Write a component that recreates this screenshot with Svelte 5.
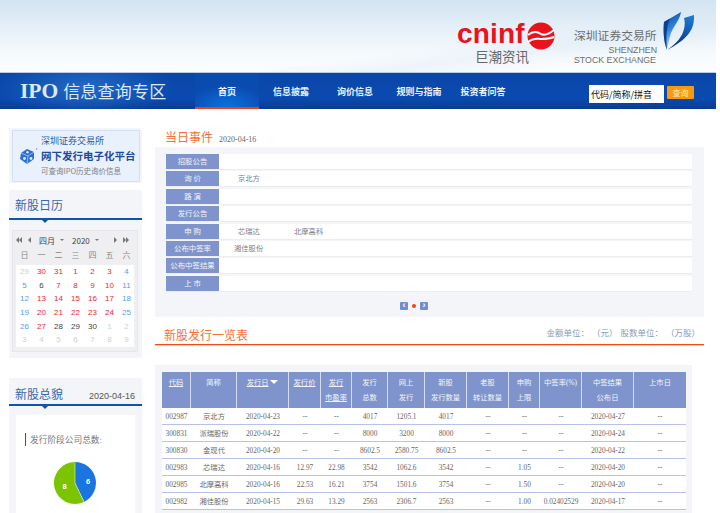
<script>
  const nav = ['首页', '信息披露', '询价信息', '规则与指南', '投资者问答'];
  const weekDays = ['日', '一', '二', '三', '四', '五', '六'];

  // m = other month, r = subscription day, w = weekend, plain = normal
  const calendar = [
    [['29', 'm'], ['30', 'r'], ['31', 'r'], ['1', 'r'], ['2', 'r'], ['3', 'r'], ['4', 'w']],
    [['5', 'w'], ['6', ''], ['7', 'r'], ['8', 'r'], ['9', 'r'], ['10', 'r'], ['11', 'w']],
    [['12', 'w'], ['13', 'r'], ['14', 'r'], ['15', 'r'], ['16', 'r'], ['17', 'r'], ['18', 'w']],
    [['19', 'w'], ['20', 'r'], ['21', 'r'], ['22', 'r'], ['23', 'r'], ['24', 'r'], ['25', 'w']],
    [['26', 'w'], ['27', 'r'], ['28', ''], ['29', ''], ['30', ''], ['1', 'm'], ['2', 'm']],
    [['3', 'm'], ['4', 'm'], ['5', 'm'], ['6', 'm'], ['7', 'm'], ['8', 'm'], ['9', 'm']]
  ];

  const events = [
    { label: '招股公告', items: [] },
    { label: '询 价', items: ['京北方'] },
    { label: '路 演', items: [] },
    { label: '发行公告', items: [] },
    { label: '申 购', items: ['芯瑞达', '北摩高科'] },
    { label: '公布中签率', items: ['湘佳股份'], near: true },
    { label: '公布中签结果', items: [] },
    { label: '上 市', items: [] }
  ];

  const columns = [29, 46, 52, 32, 31, 36, 37, 42, 42, 31, 42, 52, 52];

  const rows = [
    ['002987', '京北方', '2020-04-23', '--', '--', '4017', '1205.1', '4017', '--', '--', '--', '2020-04-27', '--'],
    ['300831', '派瑞股份', '2020-04-22', '--', '--', '8000', '3200', '8000', '--', '--', '--', '2020-04-24', '--'],
    ['300830', '金现代', '2020-04-20', '--', '--', '8602.5', '2580.75', '8602.5', '--', '--', '--', '2020-04-22', '--'],
    ['002983', '芯瑞达', '2020-04-16', '12.97', '22.98', '3542', '1062.6', '3542', '--', '1.05', '--', '2020-04-20', '--'],
    ['002985', '北摩高科', '2020-04-16', '22.53', '16.21', '3754', '1501.6', '3754', '--', '1.50', '--', '2020-04-20', '--'],
    ['002982', '湘佳股份', '2020-04-15', '29.63', '13.29', '2563', '2306.7', '2563', '--', '1.00', '0.02402529', '2020-04-17', '--']
  ];
</script>

<div class="page">
  <header class="top">
    <div class="logos">
      <div class="cninf">
        <div class="cninf__main">
          <span class="cninf__word">cninf</span>
          <svg class="cninf__mark" viewBox="0 0 28 28" width="28" height="28">
            <circle cx="14" cy="14" r="13.5" fill="#e8131c" />
            <path d="M1 13 C7 8 11 10 14 12 C18 14 22 12 27 8" fill="none" stroke="#fff" stroke-width="2" />
            <path d="M1 20 C7 15 11 17 14 17 C18 17 22 17 27 15" fill="none" stroke="#fff" stroke-width="2" />
          </svg>
        </div>
        <div class="cninf__cn">巨潮资讯</div>
      </div>
      <div class="szse">
        <div class="szse__cn">深圳证券交易所</div>
        <div class="szse__en szse__en--right">SHENZHEN</div>
        <div class="szse__en">STOCK EXCHANGE</div>
      </div>
      <svg class="shield" viewBox="0 0 31 41" width="31" height="41">
        <defs>
          <linearGradient id="shieldA" x1="0.2" y1="0" x2="0.5" y2="1">
            <stop offset="0" stop-color="#0d469e" />
            <stop offset="0.45" stop-color="#2f83dc" />
            <stop offset="1" stop-color="#c5ecfb" />
          </linearGradient>
          <linearGradient id="shieldB" x1="0.7" y1="0" x2="0.3" y2="1">
            <stop offset="0" stop-color="#1a7ad0" />
            <stop offset="1" stop-color="#06287a" />
          </linearGradient>
        </defs>
        <path d="M1 11 L18 1 C17 9 11 14 8 22 C6 28 5 34 4 39 C1 32 0 22 1 11 Z" fill="url(#shieldA)" />
        <path d="M1 11 L7 7.5 C3 16 3 28 4 39 C1 32 0 22 1 11 Z" fill="#0b3f94" />
        <path d="M21 7 L31 4 C31.5 17 27 27 4 39 C14 32 19 26 21 18 C22 14 22 10 21 7 Z" fill="url(#shieldB)" />
      </svg>
    </div>
  </header>

  <nav class="bar">
    <div class="brand"><span class="brand__ipo">IPO</span> 信息查询专区</div>
    <ul class="menu">
      {#each nav as item, i}
        <li class="menu__item" class:active={i === 0}>{item}</li>
      {/each}
    </ul>
    <div class="search">
      <input class="search__input" value="代码/简称/拼音" />
      <button class="search__btn" type="button">查询</button>
    </div>
  </nav>

  <div class="content">
    <aside class="side">
      <div class="promo">
        <div class="promo__inner">
          <svg class="promo__icon" viewBox="0 0 20 20" width="20" height="20">
            <path d="M9 3 L16 6 L16 13 L9 18 L2 13 L3 7 Z" fill="#2f6fd0" />
            <path d="M3 7 L10 10 L16 6 M10 10 L9 18" fill="none" stroke="#a9cdf6" stroke-width="0.8" />
            <circle cx="6.5" cy="12.5" r="1.4" fill="#dcebfb" />
            <circle cx="13" cy="12.5" r="1.4" fill="#dcebfb" />
            <circle cx="9.5" cy="6.3" r="1.2" fill="#dcebfb" />
            <circle cx="18.5" cy="3" r="0.8" fill="#5aa6ea" />
          </svg>
          <div>
            <div class="promo__a">深圳证券交易所</div>
            <div class="promo__b">网下发行电子化平台</div>
            <div class="promo__c">可查询IPO历史询价信息</div>
          </div>
        </div>
      </div>

      <section class="box box--calendar">
        <h2 class="box__title"><span>新股日历</span></h2>
        <div class="cal">
          <div class="cal__head">
            <span class="cal__arrows">
              <i class="tri tri--l"></i><i class="tri tri--l"></i><i class="gap"></i><i class="tri tri--l"></i>
            </span>
            <span class="cal__pick cal__pick--month">四月<i class="caret"></i></span>
            <span class="cal__pick">2020<i class="caret"></i></span>
            <span class="cal__arrows cal__arrows--right">
              <i class="tri tri--r"></i><i class="gap"></i><i class="tri tri--r"></i><i class="tri tri--r"></i>
            </span>
          </div>
          <div class="cal__week">
            {#each weekDays as d}<span>{d}</span>{/each}
          </div>
          <div class="cal__days">
            {#each calendar as week}
              {#each week as [day, kind]}
                <span class="day {kind}">{day}</span>
              {/each}
            {/each}
          </div>
        </div>
      </section>

      <section class="box box--overview">
        <h2 class="box__title"><span>新股总貌</span><em>2020-04-16</em></h2>
        <div class="overview">
          <div class="overview__label">发行阶段公司总数:</div>
          <svg class="pie" viewBox="0 0 44 44" width="44" height="44">
            <path d="M22 22 L22 1 A21 21 0 0 1 31.1 40.9 Z" fill="#1a75e0" />
            <path d="M22 22 L31.1 40.9 A21 21 0 1 1 22 1 Z" fill="#7cc400" />
            <path d="M22 1 L22 22 L31.1 40.9" fill="none" stroke="#fff" stroke-width="0.5" />
            <text x="33" y="23" class="pie__num">6</text>
            <text x="9.5" y="28" class="pie__num">8</text>
          </svg>
        </div>
      </section>
    </aside>

    <main class="main">
      <div class="heading">
        <h2>当日事件</h2>
        <span>2020-04-16</span>
      </div>

      <div class="events">
        {#each events as row}
          <div class="event">
            <div class="event__label">{row.label}</div>
            <div class="event__items" class:near={row.near}>
              {#each row.items as name}<span>{name}</span>{/each}
            </div>
          </div>
        {/each}
        <div class="pager">
          <i class="pager__btn">‹</i>
          <i class="pager__dot"></i>
          <i class="pager__btn">›</i>
        </div>
      </div>

      <div class="listhead">
        <h2>新股发行一览表</h2>
        <div class="units">
          <span>金额单位：</span><span>（元）</span><span>股数单位：</span><span>（万股）</span>
        </div>
      </div>

      <div class="tablewrap">
        <table>
          <colgroup>
            {#each columns as w}<col style="width: {w}px" />{/each}
          </colgroup>
          <thead>
            <tr>
              <th><u>代码</u></th>
              <th>简称</th>
              <th><u>发行日</u> <i class="sort"></i></th>
              <th><u>发行价</u></th>
              <th><u>发行</u><br /><u>市盈率</u></th>
              <th>发行<br />总数</th>
              <th>网上<br />发行</th>
              <th>新股<br />发行数量</th>
              <th>老股<br />转让数量</th>
              <th>申购<br />上限</th>
              <th>中签率(%)</th>
              <th>中签结果<br />公布日</th>
              <th>上市日</th>
            </tr>
          </thead>
          <tbody>
            {#each rows as row}
              <tr>
                {#each row as cell}<td>{cell}</td>{/each}
              </tr>
            {/each}
          </tbody>
        </table>
      </div>
    </main>
  </div>
</div>

<style>
  :global(body) {
    margin: 0;
    background: #fff;
    overflow: hidden;
  }

  .page {
    width: 716px;
    height: 513px;
    overflow: hidden;
    font-family: "Liberation Serif", "Noto Sans CJK SC", serif;
    font-size: 9px;
    color: #666;
  }

  .top {
    height: 73px;
    box-sizing: border-box;
    background:
      linear-gradient(172deg, transparent 62%, rgba(214, 230, 243, 0.35) 72%, transparent 84%),
      linear-gradient(180deg, #d2e3f2 0%, #e6f0f8 40%, #f8fbfd 80%, #fafcfe 100%);
    border-bottom: 1px solid #b9cde6;
  }

  .logos {
    display: flex;
    justify-content: flex-end;
    padding: 11px 22px 0 0;
  }

  .cninf {
    width: 100px;
    margin-right: 17px;
    padding-top: 9px;
    font-family: "Liberation Sans", "Noto Sans CJK SC", sans-serif;
  }

  .cninf__main {
    display: flex;
    align-items: flex-start;
    height: 30px;
  }

  .cninf__word {
    font-size: 28px;
    font-weight: 700;
    color: #e8131c;
    letter-spacing: 0.2px;
    line-height: 29px;
    margin-top: -1px;
  }

  .cninf__mark {
    margin-left: 2px;
    margin-top: 2px;
    flex: none;
  }

  .cninf__cn {
    margin-left: 18px;
    font-size: 13.5px;
    line-height: 15px;
    color: #666;
    white-space: nowrap;
  }

  .szse {
    width: 83px;
    padding-top: 18px;
    font-family: "Liberation Sans", "Noto Sans CJK SC", sans-serif;
    color: #6c6c6c;
  }

  .szse__cn {
    font-size: 11.8px;
    line-height: 14px;
    white-space: nowrap;
    margin-bottom: 2px;
  }

  .szse__en {
    font-size: 8.8px;
    line-height: 10px;
    white-space: nowrap;
  }

  .szse__en--right {
    text-align: right;
  }

  .shield {
    margin-left: 6px;
    flex: none;
  }

  .bar {
    display: flex;
    align-items: stretch;
    height: 36px;
    background: linear-gradient(180deg, #0a46a8 0%, #0a4ab0 70%, #083c92 100%);
    color: #fff;
  }

  .brand {
    width: 175px;
    padding-left: 20px;
    font-family: "Liberation Sans", "Noto Sans CJK SC", sans-serif;
    font-size: 17px;
    line-height: 36px;
    letter-spacing: 0.2px;
    color: #dce9f7;
    white-space: nowrap;
    background: radial-gradient(ellipse 90px 30px at 85px 14px, #2169c4 0%, transparent 100%);
  }

  .brand__ipo {
    font-family: "Liberation Serif", serif;
    font-size: 21.5px;
    font-weight: 700;
    letter-spacing: 0;
  }

  .menu {
    display: flex;
    margin: 0;
    padding: 0;
    list-style: none;
  }

  .menu__item {
    width: 64px;
    text-align: center;
    font-family: "Noto Sans CJK SC", sans-serif;
    font-size: 9px;
    font-weight: 700;
    line-height: 37px;
    color: #eef4fb;
    white-space: nowrap;
  }

  .menu__item.active {
    box-sizing: border-box;
    background: radial-gradient(ellipse 40px 22px at 50% 100%, #0b72e0 0%, #0a4bb0 100%);
    border-bottom: 2px solid #f0401a;
  }

  .search {
    display: flex;
    align-items: flex-start;
    gap: 3px;
    margin-left: 74px;
    padding-top: 12px;
  }

  .search__input {
    width: 75px;
    height: 18px;
    box-sizing: border-box;
    padding: 1px 2px 0;
    border: 0;
    background: #fff;
    color: #111;
    font-family: "Noto Sans CJK SC", sans-serif;
    font-size: 9px;
  }

  .search__btn {
    width: 27px;
    height: 13px;
    margin-top: 1px;
    padding: 0;
    border: 0;
    border-radius: 1px;
    background: #f99a0e;
    color: #ffe9c8;
    font-family: "Noto Sans CJK SC", sans-serif;
    font-size: 8px;
    line-height: 13px;
  }

  .content {
    display: flex;
    align-items: flex-start;
    gap: 13px;
    padding: 19px 12px 0 9px;
  }

  .side {
    width: 133px;
    flex: none;
    font-family: "Noto Sans CJK SC", sans-serif;
  }

  .promo {
    height: 55px;
    box-sizing: border-box;
    padding: 2px 2px 1px 3px;
    background: #f4f5f9;
  }

  .promo__inner {
    display: flex;
    align-items: center;
    gap: 3px;
    height: 100%;
    box-sizing: border-box;
    padding-left: 5px;
    background: #e9f1fc;
    border: 1px solid #d2e0f6;
    border-radius: 1px;
  }

  .promo__icon {
    flex: none;
    margin-top: -1px;
  }

  .promo__a {
    font-size: 9px;
    line-height: 14px;
    color: #2a5aa6;
    white-space: nowrap;
  }

  .promo__b {
    font-size: 10.5px;
    font-weight: 700;
    line-height: 15px;
    color: #1f4b9c;
    white-space: nowrap;
  }

  .promo__c {
    font-size: 7.5px;
    line-height: 15px;
    color: #7d7d85;
    white-space: nowrap;
  }

  .box {
    background: #f4f5f9;
  }

  .box--calendar {
    height: 168px;
    margin-top: 7px;
    box-sizing: border-box;
    padding-top: 5px;
  }

  .box--overview {
    height: 135px;
    margin-top: 20px;
    box-sizing: border-box;
    padding-top: 3px;
  }

  .box__title {
    position: relative;
    display: flex;
    justify-content: space-between;
    align-items: flex-end;
    height: 21px;
    margin: 0 0 9px;
    padding: 0 7px 2px 6px;
    border-bottom: 2px solid #0f55b0;
    font-size: 12px;
    font-weight: 400;
    line-height: 17px;
    color: #3a66aa;
  }

  .box--calendar .box__title {
    height: 18px;
    padding-bottom: 5px;
    margin-bottom: 10px;
  }

  .box__title::after {
    content: '';
    position: absolute;
    left: 33px;
    bottom: -5px;
    border: 3px solid transparent;
    border-top-color: #0f55b0;
    border-bottom-width: 0;
  }

  .box__title em {
    font-family: "Liberation Sans", sans-serif;
    font-size: 9px;
    font-style: normal;
    line-height: 12px;
    color: #555;
  }

  .cal {
    margin: 0 4px 0 3px;
    padding: 3px 3px 3px;
    height: 122px;
    box-sizing: border-box;
    background: #efeff1;
    border: 1px solid #e6e6e8;
  }

  .cal__head {
    display: flex;
    align-items: center;
    height: 12px;
    font-size: 8px;
    color: #444;
  }

  .cal__arrows {
    display: flex;
    align-items: center;
  }

  .cal__arrows--right {
    margin-left: 15px;
  }

  .cal__pick {
    display: flex;
    align-items: center;
    margin-left: 8px;
    white-space: nowrap;
  }

  .gap {
    width: 6px;
  }

  .tri {
    width: 0;
    height: 0;
    border: 3px solid transparent;
    border-left-width: 0;
    border-right-width: 0;
  }

  .tri--l {
    border-left-width: 0;
    border-right: 3px solid #777;
  }

  .tri--r {
    border-left: 3px solid #777;
  }

  .caret {
    margin-left: 5px;
    border: 2.5px solid transparent;
    border-top-color: #777;
    border-bottom-width: 0;
  }

  .cal__week {
    display: grid;
    grid-template-columns: repeat(7, 17px);
    height: 19px;
    line-height: 20px;
    text-align: center;
    font-family: "Liberation Serif", "Noto Sans CJK SC", serif;
    font-size: 8px;
    color: #888;
  }

  .cal__days {
    display: grid;
    grid-template-columns: repeat(7, 17px);
    grid-auto-rows: 13.7px;
    padding: 0;
    background: #fff;
    text-align: center;
    font-family: "Liberation Sans", sans-serif;
    font-size: 8px;
    line-height: 13.7px;
    color: #444;
  }

  .day.m {
    color: #cfcfcf;
  }

  .day.r {
    color: #f01c2c;
  }

  .day.w {
    color: #5b9bf0;
  }

  .overview {
    margin: 0 7px;
    height: 110px;
    padding: 18px 0 0 9px;
    box-sizing: border-box;
    background: #fff;
  }

  .overview__label {
    height: 13px;
    padding-left: 4px;
    border-left: 1px solid #2a5aa6;
    font-family: "Liberation Serif", "Noto Sans CJK SC", serif;
    font-size: 8.7px;
    line-height: 14px;
    color: #777;
    white-space: nowrap;
  }

  .pie {
    display: block;
    margin: 15px 0 0 28px;
  }

  .pie__num {
    fill: #fff;
    font-family: "Liberation Sans", sans-serif;
    font-size: 7.5px;
    font-weight: 700;
  }

  .main {
    width: 549px;
    flex: none;
  }

  .heading {
    display: flex;
    align-items: baseline;
    gap: 6px;
    height: 18px;
    padding-left: 10px;
    margin-bottom: 1px;
  }

  .heading h2,
  .listhead h2 {
    margin: 0;
    font-family: "Noto Sans CJK SC", sans-serif;
    font-size: 12px;
    font-weight: 400;
    line-height: 17px;
    color: #f4703a;
  }

  .heading span {
    font-size: 8px;
    color: #666;
  }

  .events {
    height: 170px;
    box-sizing: border-box;
    padding: 7px 12px 0 11px;
    background: #f4f5f9;
  }

  .event {
    display: flex;
    height: 15px;
    margin-bottom: 1.4px;
    background: #fff;
    border-bottom: 1px solid #ecedf1;
    box-sizing: content-box;
  }

  .event__label {
    width: 53px;
    flex: none;
    text-align: center;
    background: #7f94cc;
    color: #f2f4fa;
    line-height: 15px;
    font-size: 7.4px;
    white-space: nowrap;
  }

  .event__items {
    display: flex;
    padding-left: 19px;
    line-height: 15px;
    color: #7c7c84;
    font-size: 7.3px;
  }

  .event__items.near {
    padding-left: 15px;
  }

  .event__items span {
    width: 56px;
  }

  .pager {
    display: flex;
    justify-content: center;
    align-items: center;
    gap: 3px;
    margin-top: 10px;
    padding-right: 30px;
    height: 9px;
  }

  .pager__btn {
    width: 8px;
    height: 8px;
    border-radius: 1px;
    background: #6f8fd0;
    color: #fff;
    font-style: normal;
    font-family: "Liberation Sans", sans-serif;
    font-weight: 700;
    font-size: 9px;
    line-height: 7px;
    text-align: center;
  }

  .pager__dot {
    width: 4px;
    height: 4px;
    margin: 0 1px;
    border-radius: 50%;
    background: #f0401a;
  }

  .listhead {
    display: flex;
    justify-content: space-between;
    align-items: flex-end;
    height: 28px;
    box-sizing: border-box;
    padding: 0 4px 1px 9px;
    border-bottom: 1px solid #ee4d16;
    box-shadow: 0 1px 0 #f9cdb8;
  }

  .units {
    display: flex;
    gap: 3px;
    margin-bottom: 2px;
    font-family: "Noto Sans CJK SC", sans-serif;
    font-size: 8.5px;
    line-height: 17px;
    color: #8a9ab8;
    white-space: nowrap;
  }

  .tablewrap {
    width: 537px;
    height: 148px;
    margin-top: 20px;
    box-sizing: border-box;
    padding: 7px 7px 0 7px;
    background: #f4f5f9;
  }

  table {
    width: 523px;
    table-layout: fixed;
    border-collapse: separate;
    border-spacing: 0;
    background: #fff;
  }

  th {
    height: 36px;
    padding: 3px 0 0;
    box-sizing: border-box;
    vertical-align: top;
    background: #7f94cc;
    border-right: 1px solid #d6ddf0;
    color: #f2f4fa;
    font-size: 7.3px;
    font-weight: 400;
    line-height: 15px;
    white-space: nowrap;
  }

  th:last-child {
    border-right: 0;
  }

  th u {
    text-decoration: underline;
  }

  .sort {
    display: inline-block;
    border: 4px solid transparent;
    border-top-color: #fff;
    border-bottom-width: 0;
    vertical-align: 1px;
  }

  td {
    height: 17px;
    padding: 0;
    box-sizing: border-box;
    border-bottom: 1px solid #b6c2e6;
    text-align: center;
    font-size: 7.3px;
    line-height: 15px;
    color: #666;
    white-space: nowrap;
  }
</style>
